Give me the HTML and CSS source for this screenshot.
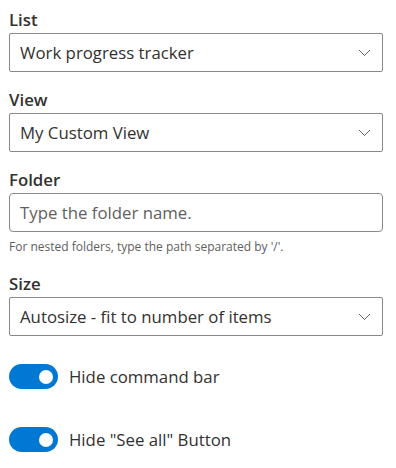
FILE: index.html
```html
<!DOCTYPE html>
<html lang="en">
<head>
    <meta charset="UTF-8">
    <title>Web part settings</title>
    <link rel="stylesheet" href="styles.css">
</head>
<body>
    <div class="panel">
        <div class="field">
            <label class="field-label">List</label>
            <div class="dropdown">
                <span class="dropdown-title">Work progress tracker</span>
                <svg class="chevron" viewBox="0 0 12 8" width="13" height="8"><path d="M0.5 1 L6 6.5 L11.5 1" fill="none" stroke="#605e5c" stroke-width="1"/></svg>
            </div>
        </div>
        <div class="field">
            <label class="field-label">View</label>
            <div class="dropdown">
                <span class="dropdown-title">My Custom View</span>
                <svg class="chevron" viewBox="0 0 12 8" width="13" height="8"><path d="M0.5 1 L6 6.5 L11.5 1" fill="none" stroke="#605e5c" stroke-width="1"/></svg>
            </div>
        </div>
        <div class="field">
            <label class="field-label" for="folder">Folder</label>
            <div class="textfield">
                <input type="text" id="folder" placeholder="Type the folder name.">
            </div>
            <div class="description">For nested folders, type the path separated by '/'.</div>
        </div>
        <div class="field">
            <label class="field-label">Size</label>
            <div class="dropdown">
                <span class="dropdown-title">Autosize - fit to number of items</span>
                <svg class="chevron" viewBox="0 0 12 8" width="13" height="8"><path d="M0.5 1 L6 6.5 L11.5 1" fill="none" stroke="#605e5c" stroke-width="1"/></svg>
            </div>
        </div>
        <div class="toggles">
            <div class="toggle">
                <span class="toggle-pill"><span class="toggle-thumb"></span></span>
                <span class="toggle-text">Hide command bar</span>
            </div>
            <div class="toggle">
                <span class="toggle-pill"><span class="toggle-thumb"></span></span>
                <span class="toggle-text">Hide "See all" Button</span>
            </div>
        </div>
    </div>
</body>
</html>
```

FILE: styles.css
```css
* {
    box-sizing: border-box;
}
body {
    margin: 0;
    background: #ffffff;
    font-family: 'Segoe UI', 'Open Sans', sans-serif;
    color: #323130;
}
.panel {
    width: 383px;
    padding: 3px 0 0 9px;
    display: flex;
    flex-direction: column;
    gap: 11px;
}
.field-label {
    display: block;
    padding: 5px 0 0;
    height: 30px;
    line-height: 24px;
    font-size: 16.8px;
    font-weight: 600;
}
.dropdown {
    height: 39px;
    border: 1px solid #8a8886;
    border-radius: 2px;
    display: flex;
    align-items: center;
    justify-content: space-between;
    padding: 0 11px 0 10px;
    font-size: 16.8px;
}
.dropdown-title {
    white-space: nowrap;
}
.chevron {
    display: block;
    margin-top: 1px;
}
.textfield {
    height: 39px;
    border: 1px solid #8a8886;
    border-radius: 4px;
    display: flex;
    align-items: center;
}
.textfield input {
    width: 100%;
    border: none;
    outline: none;
    background: transparent;
    padding: 0 10px;
    font-family: inherit;
    font-size: 16.8px;
    color: #323130;
}
.textfield input::placeholder {
    color: #605e5c;
}
.description {
    padding-top: 6px;
    font-size: 12px;
    line-height: 18px;
    color: #605e5c;
}
.toggles {
    margin-top: 17px;
    display: flex;
    flex-direction: column;
    gap: 38px;
}
.toggle {
    display: flex;
    align-items: center;
    height: 25px;
}
.toggle-pill {
    width: 49px;
    height: 25px;
    border-radius: 13px;
    background: #0078d4;
    display: flex;
    align-items: center;
    justify-content: flex-end;
    padding-right: 5px;
}
.toggle-thumb {
    width: 14px;
    height: 14px;
    border-radius: 50%;
    background: #ffffff;
}
.toggle-text {
    margin-left: 11px;
    font-size: 16.8px;
}
```
